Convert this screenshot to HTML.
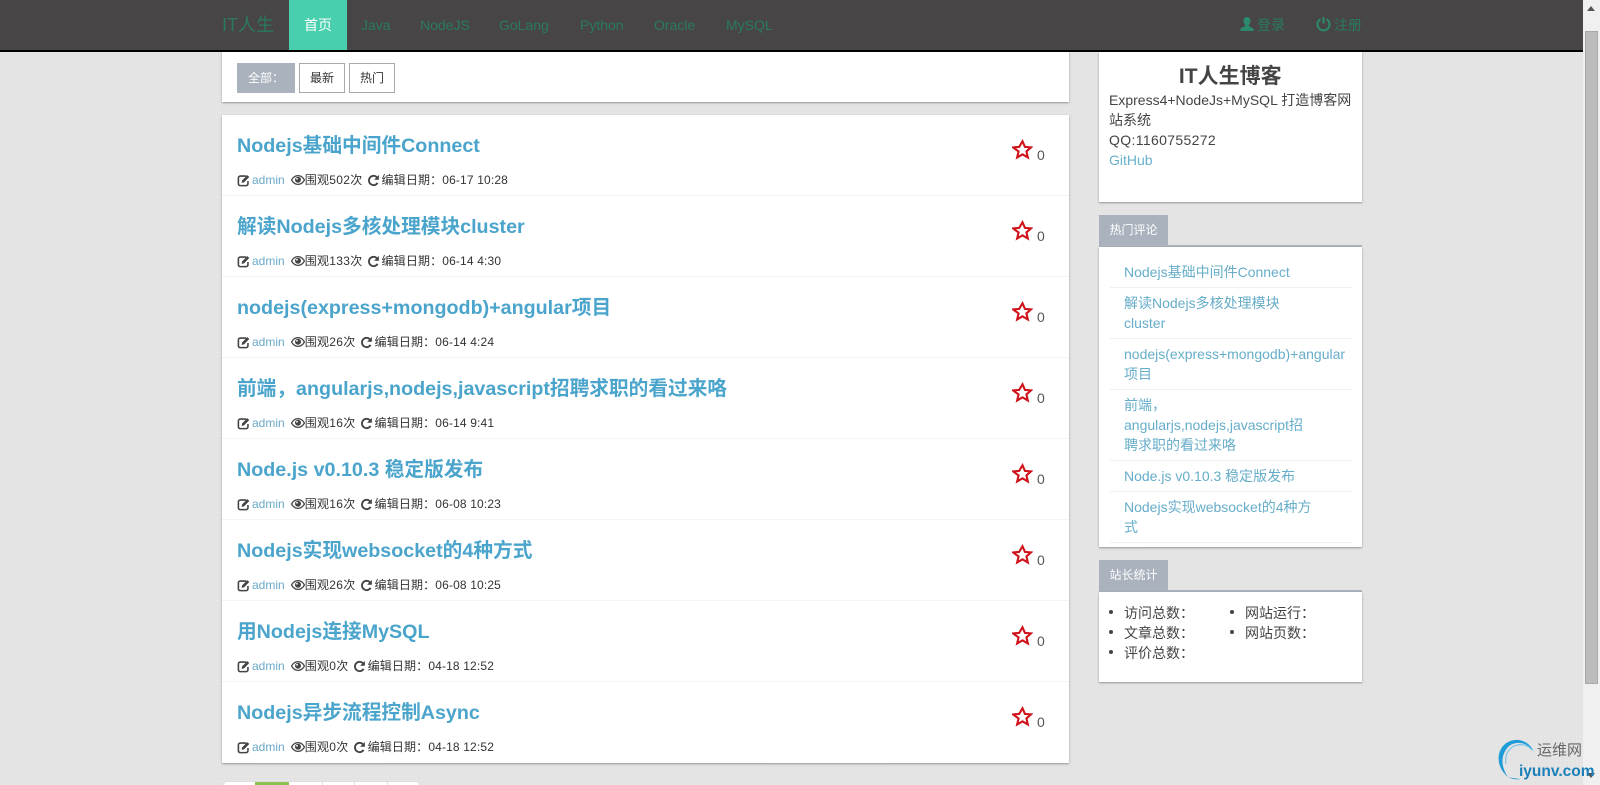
<!DOCTYPE html>
<html lang="zh">
<head>
<meta charset="utf-8">
<title>IT人生博客</title>
<style>
*{box-sizing:border-box}
html,body{margin:0;padding:0;width:1600px;height:785px;overflow:hidden}
body{position:relative;background-color:#e3e3e3;background-image:repeating-linear-gradient(0deg,rgba(255,255,255,.07) 0 1px,transparent 1px 4px),repeating-linear-gradient(90deg,rgba(255,255,255,.07) 0 1px,transparent 1px 4px);font-family:"Liberation Sans","Noto Sans CJK SC",sans-serif;font-size:14px;color:#444;line-height:20px}
a{text-decoration:none;color:inherit}
.nav{position:absolute;left:0;top:0;width:1583px;height:52px;background:#474545;border-bottom:2px solid #000;z-index:5}
.nav a{position:absolute;top:15px;color:#2a7a60;font-size:14px;line-height:20px;white-space:nowrap}
.nav .brand{left:222px;font-size:18px;top:15px}
.nav .active{left:289px;top:0;width:58px;height:50px;background:#48cfad;color:#fff;text-align:center;line-height:50px}
.nav svg{position:absolute;top:16px}
.card{position:absolute;background:#fff;box-shadow:0 1px 2px rgba(0,0,0,.35)}
.filter{left:221.5px;top:52px;width:847.5px;height:50px}
.f{position:absolute;top:11px;height:30px;line-height:28px;text-align:center;font-size:12px;color:#333;border:1px solid #aaa;background:#fff}
.f.l{left:15.5px;width:58px;background:#aab2bd;border-color:#aab2bd;color:#fff}
.list{left:221.5px;top:115px;width:847.5px;height:648px}
.row{position:relative;height:81px;border-bottom:1px solid #f4f4f4}
.row:last-child{border-bottom:0}
.row h3{position:absolute;left:15.5px;top:16px;margin:0;font-size:19.7px;line-height:30px;font-weight:bold;color:#4aa4cb;white-space:nowrap}
.meta{position:absolute;left:15.5px;top:55px;height:20px;font-size:12px;line-height:20px;color:#333;white-space:nowrap;display:flex;align-items:center}
.meta svg{flex:none}
.meta a{color:#69a8c8;margin:0 6px 0 2px}
.meta .v{margin:0 4px 0 0;letter-spacing:.3px}
.meta .e{margin-left:2px;letter-spacing:.15px}
.star{position:absolute;left:790px;top:24px}
.cnt{position:absolute;left:815.5px;top:30px;color:#555;font-size:14px}
.side{left:1099px;width:262.5px}
.about{top:52px;height:150px}
.about h4{margin:0;position:absolute;left:0;right:0;top:12px;text-align:center;font-size:21px;line-height:26px;font-weight:bold;color:#444}
.about p{position:absolute;left:10px;top:38px;width:245px;margin:0}
.about a{color:#69b0cc}
.tab{position:absolute;left:1099px;width:69px;height:31px;background:#aab2bd;color:#fff;font-size:12px;line-height:31px;text-align:center}
.bar{position:absolute;left:1099px;width:262.5px;height:2px;background:#aab2bd}
.hot{top:247px;height:300px}
.hot a{position:absolute;left:25px;width:225px;color:#66adc9;font-size:14px;line-height:20px}
.hot i{position:absolute;left:11px;width:242px;height:1px;background:#f0f0f0}
.stat{top:592px;height:90px}
.stat span{position:absolute;font-size:14px;line-height:20px;color:#444;white-space:nowrap}
.stat b{position:absolute;width:4px;height:4px;border-radius:50%;background:#444}
.page{position:absolute;left:223px;top:781px;width:197px;height:4px;background:#fff;border:1px solid #ddd;border-bottom:0;border-radius:4px 4px 0 0;overflow:hidden}
.page u{position:absolute;top:0;height:4px;width:1px;background:#ddd}
.page s{position:absolute;left:31px;top:-1px;width:34px;height:5px;background:#8cc152}
.sb{position:absolute;left:1583px;top:0;width:17px;height:785px;background:#f0f0f0;z-index:4}
.thumb{position:absolute;left:2px;top:31px;width:13px;height:653px;background:#bcbcbc;border:1px solid #a9a9a9}
.up{position:absolute;left:4px;top:6px;width:0;height:0;border:4px solid transparent;border-top:0;border-bottom:5px solid #555}
.down{position:absolute;left:4px;top:773px;width:0;height:0;border:4px solid transparent;border-bottom:0;border-top:5px solid #555}
.wm{position:absolute;left:1495px;top:735px;width:105px;height:50px;z-index:6}
.wm .cn{position:absolute;left:42px;top:6px;font-size:15px;line-height:20px;color:#666;white-space:nowrap}
.wm .en{position:absolute;left:24px;top:27px;font-size:15.500px;line-height:20px;font-weight:bold;color:#1b7fb8;white-space:nowrap}
</style>
</head>
<body>
<svg width="0" height="0" style="position:absolute">
<defs>
<symbol id="ed" viewBox="0 0 14 14"><path d="M10 2.200H3.500A2 2 0 0 0 1.500 4.200v6.300a2 2 0 0 0 2 2h6.300a2 2 0 0 0 2-2V7.500" fill="none" stroke="#444" stroke-width="1.700"/><path d="M5 9.500l.5-2.600L11.200 1.200l2 2L7.600 9z" fill="#444"/></symbol>
<symbol id="ey" viewBox="0 0 14 14"><path d="M.5 7C2.200 4 4.400 2.600 7 2.600S11.800 4 13.500 7c-1.700 3-3.900 4.400-6.500 4.400S2.200 10 .5 7z" fill="none" stroke="#444" stroke-width="1.300"/><circle cx="7" cy="6.800" r="3" fill="#444"/><circle cx="6" cy="5.800" r=".9" fill="#fff"/></symbol>
<symbol id="re" viewBox="0 0 14 14"><path d="M11.400 9.600A5 5 0 1 1 10.600 3.400" fill="none" stroke="#444" stroke-width="2"/><path d="M12.800 1v5.200H7.600z" fill="#444"/></symbol>
<symbol id="st" viewBox="0 0 24 24"><path d="M12 2.600l2.800 6.400 6.900.6-5.200 4.600 1.600 6.900-6.100-3.600-6.100 3.600 1.600-6.900L1.300 9.600l6.900-.6z" fill="none" stroke="#d0121b" stroke-width="2.400" stroke-linejoin="miter"/></symbol>
</defs>
</svg>

<div class="nav">
<a class="brand" href="#">IT人生</a>
<a class="active" href="#">首页</a>
<a href="#" style="left:361px">Java</a>
<a href="#" style="left:420px">NodeJS</a>
<a href="#" style="left:499px">GoLang</a>
<a href="#" style="left:580px">Python</a>
<a href="#" style="left:654px">Oracle</a>
<a href="#" style="left:726px">MySQL</a>
<svg style="left:1240px" width="14" height="16" viewBox="0 0 14 16"><path d="M7 1c2.200 0 3.500 1.600 3.500 3.800 0 1.500-.7 3-1.600 3.800v1.600c1.500.7 4.600 1.500 4.600 3V15H.5v-1.800c0-1.500 3.100-2.300 4.600-3V8.600C4.200 7.800 3.500 6.300 3.500 4.800 3.500 2.600 4.800 1 7 1z" fill="#2b8a6e"/></svg>
<a href="#" style="left:1257px">登录</a>
<svg style="left:1316px" width="15" height="16" viewBox="0 0 15 16"><path d="M4.500 3.200a6 6 0 1 0 6 0" fill="none" stroke="#2b8a6e" stroke-width="2"/><path d="M7.500 1v6.500" stroke="#2b8a6e" stroke-width="2"/></svg>
<a href="#" style="left:1334px">注册</a>
</div>

<div class="card filter">
<span class="f l">全部：</span>
<a class="f" href="#" style="left:77.500px;width:46px">最新</a>
<a class="f" href="#" style="left:127.500px;width:46px">热门</a>
</div>

<div class="card list">
<div class="row"><h3>Nodejs基础中间件Connect</h3><div class="meta"><svg width="13" height="13"><use href="#ed"/></svg><a href="#">admin</a><svg width="14" height="14"><use href="#ey"/></svg><span class="v">围观502次</span><svg width="13" height="13"><use href="#re"/></svg><span class="e">编辑日期：06-17 10:28</span></div><svg class="star" width="21" height="21"><use href="#st"/></svg><span class="cnt">0</span></div>
<div class="row"><h3>解读Nodejs多核处理模块cluster</h3><div class="meta"><svg width="13" height="13"><use href="#ed"/></svg><a href="#">admin</a><svg width="14" height="14"><use href="#ey"/></svg><span class="v">围观133次</span><svg width="13" height="13"><use href="#re"/></svg><span class="e">编辑日期：06-14 4:30</span></div><svg class="star" width="21" height="21"><use href="#st"/></svg><span class="cnt">0</span></div>
<div class="row"><h3>nodejs(express+mongodb)+angular项目</h3><div class="meta"><svg width="13" height="13"><use href="#ed"/></svg><a href="#">admin</a><svg width="14" height="14"><use href="#ey"/></svg><span class="v">围观26次</span><svg width="13" height="13"><use href="#re"/></svg><span class="e">编辑日期：06-14 4:24</span></div><svg class="star" width="21" height="21"><use href="#st"/></svg><span class="cnt">0</span></div>
<div class="row"><h3>前端，angularjs,nodejs,javascript招聘求职的看过来咯</h3><div class="meta"><svg width="13" height="13"><use href="#ed"/></svg><a href="#">admin</a><svg width="14" height="14"><use href="#ey"/></svg><span class="v">围观16次</span><svg width="13" height="13"><use href="#re"/></svg><span class="e">编辑日期：06-14 9:41</span></div><svg class="star" width="21" height="21"><use href="#st"/></svg><span class="cnt">0</span></div>
<div class="row"><h3>Node.js v0.10.3 稳定版发布</h3><div class="meta"><svg width="13" height="13"><use href="#ed"/></svg><a href="#">admin</a><svg width="14" height="14"><use href="#ey"/></svg><span class="v">围观16次</span><svg width="13" height="13"><use href="#re"/></svg><span class="e">编辑日期：06-08 10:23</span></div><svg class="star" width="21" height="21"><use href="#st"/></svg><span class="cnt">0</span></div>
<div class="row"><h3>Nodejs实现websocket的4种方式</h3><div class="meta"><svg width="13" height="13"><use href="#ed"/></svg><a href="#">admin</a><svg width="14" height="14"><use href="#ey"/></svg><span class="v">围观26次</span><svg width="13" height="13"><use href="#re"/></svg><span class="e">编辑日期：06-08 10:25</span></div><svg class="star" width="21" height="21"><use href="#st"/></svg><span class="cnt">0</span></div>
<div class="row"><h3>用Nodejs连接MySQL</h3><div class="meta"><svg width="13" height="13"><use href="#ed"/></svg><a href="#">admin</a><svg width="14" height="14"><use href="#ey"/></svg><span class="v">围观0次</span><svg width="13" height="13"><use href="#re"/></svg><span class="e">编辑日期：04-18 12:52</span></div><svg class="star" width="21" height="21"><use href="#st"/></svg><span class="cnt">0</span></div>
<div class="row"><h3>Nodejs异步流程控制Async</h3><div class="meta"><svg width="13" height="13"><use href="#ed"/></svg><a href="#">admin</a><svg width="14" height="14"><use href="#ey"/></svg><span class="v">围观0次</span><svg width="13" height="13"><use href="#re"/></svg><span class="e">编辑日期：04-18 12:52</span></div><svg class="star" width="21" height="21"><use href="#st"/></svg><span class="cnt">0</span></div>
</div>

<div class="card side about">
<h4>IT人生博客</h4>
<p>Express4+NodeJs+MySQL 打造博客网站系统<br><span style="letter-spacing:.35px">QQ:1160755272</span><br><a href="#">GitHub</a></p>
</div>

<div class="tab" style="top:215px">热门评论</div>
<div class="bar" style="top:245px"></div>
<div class="card side hot">
<a href="#" style="top:15px">Nodejs基础中间件Connect</a><i style="top:40px"></i>
<a href="#" style="top:46px;width:180px">解读Nodejs多核处理模块cluster</a><i style="top:91px"></i>
<a href="#" style="top:97px;width:225px">nodejs(express+mongodb)+angular项目</a><i style="top:142px"></i>
<a href="#" style="top:148px;width:190px">前端，<br>angularjs,nodejs,javascript招<br>聘求职的看过来咯</a><i style="top:213px"></i>
<a href="#" style="top:219px">Node.js v0.10.3 稳定版发布</a><i style="top:244px"></i>
<a href="#" style="top:250px;width:200px">Nodejs实现websocket的4种方式</a><i style="top:295px"></i>
</div>

<div class="tab" style="top:560px">站长统计</div>
<div class="bar" style="top:590px"></div>
<div class="card side stat">
<b style="left:10px;top:18px"></b><span style="left:25px;top:11px">访问总数：</span>
<b style="left:10px;top:38px"></b><span style="left:25px;top:31px">文章总数：</span>
<b style="left:10px;top:58px"></b><span style="left:25px;top:51px">评价总数：</span>
<b style="left:131px;top:18px"></b><span style="left:146px;top:11px">网站运行：</span>
<b style="left:131px;top:38px"></b><span style="left:146px;top:31px">网站页数：</span>
</div>

<div class="page"><s></s><u style="left:98px"></u><u style="left:130px"></u><u style="left:163px"></u></div>

<div class="sb"><div class="up"></div><div class="thumb"></div><div class="down"></div></div>

<div class="wm">
<svg style="position:absolute;left:0;top:0" width="46" height="46" viewBox="0 0 46 46"><path d="M39 17C34 5 20 1 10 9 1 17 1 32 13 42 6 32 5 20 14 11 22 5 33 8 39 17z" fill="#1f9bd7"/><path d="M37 15C31 8 21 8 15 14 11 18 10 24 11 29" fill="none" stroke="#7cc4e8" stroke-width="1.200"/><path d="M13 42c4 2 8 3 13 2-5-.3-9-1-13-2z" fill="#1f9bd7"/></svg>
<span class="cn">运维网</span>
<span class="en">iyunv.com</span>
</div>
</body>
</html>
